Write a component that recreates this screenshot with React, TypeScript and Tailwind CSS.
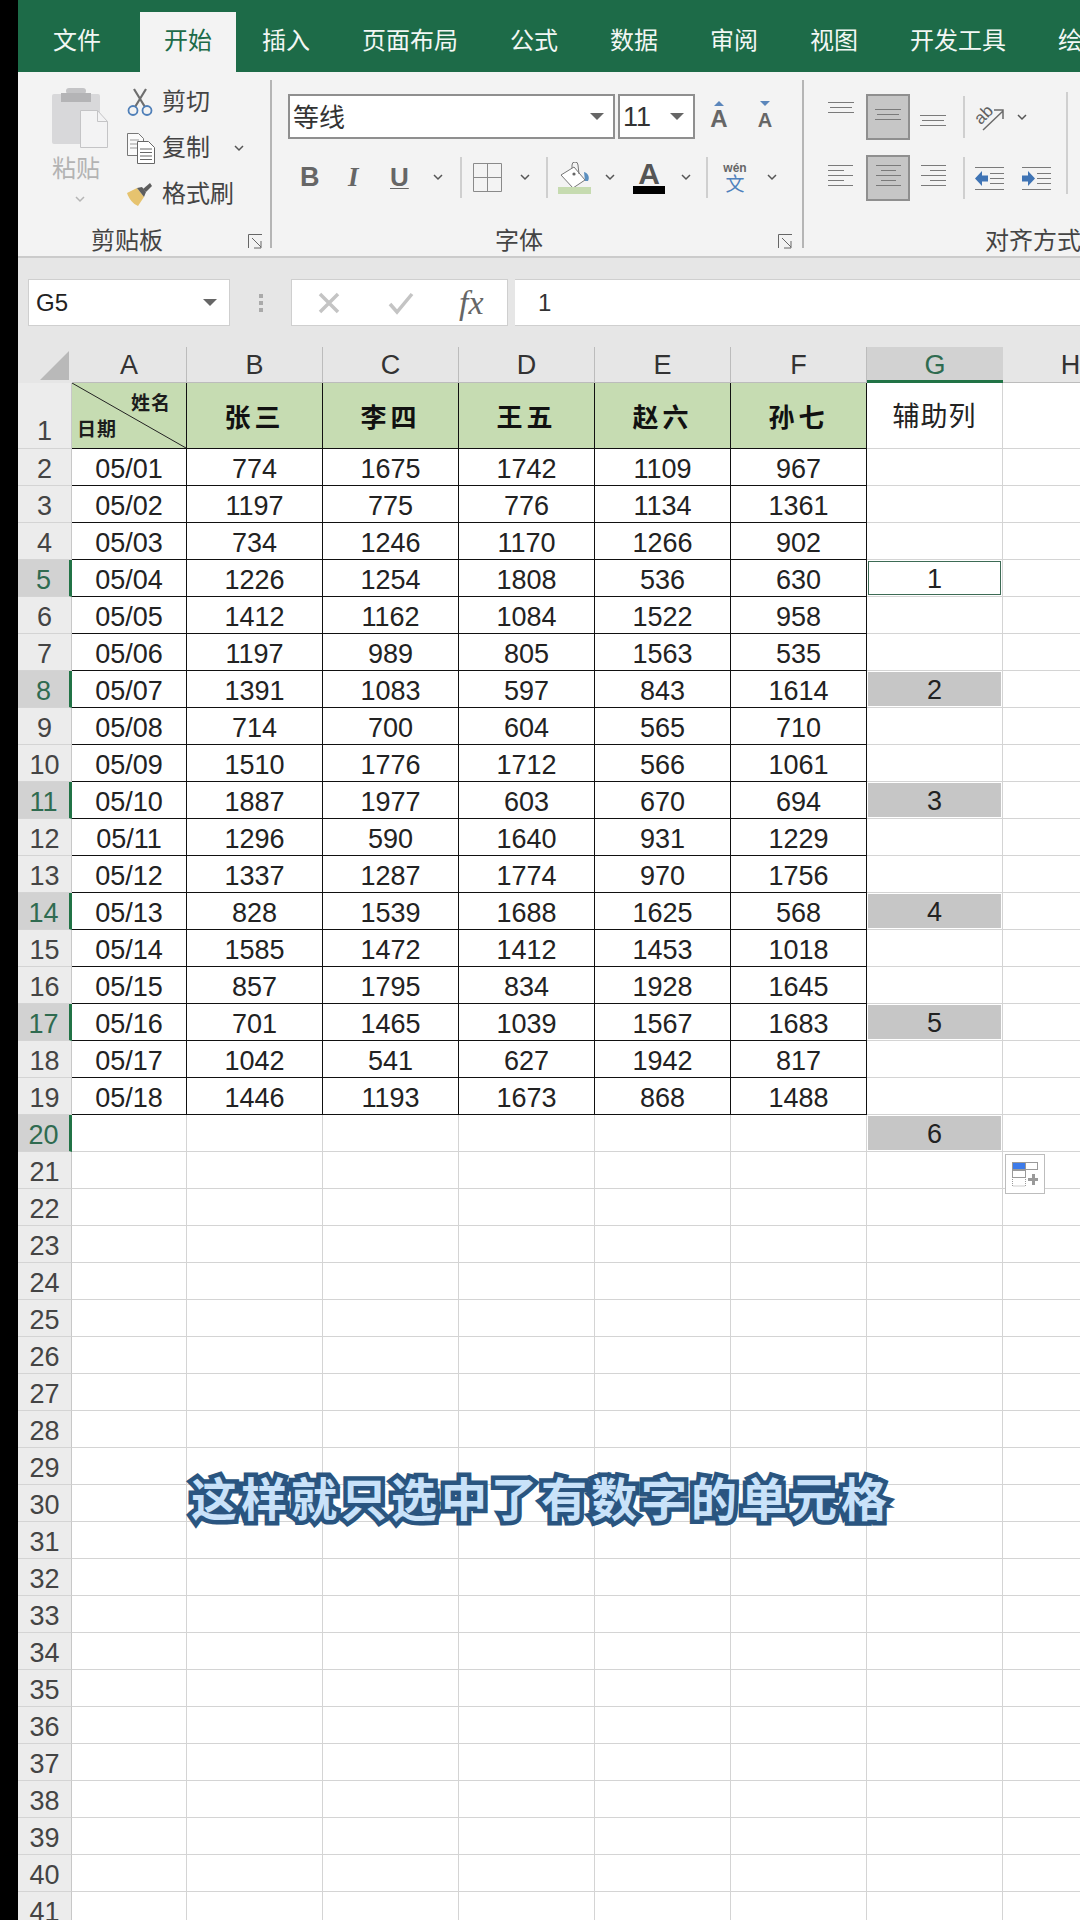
const cjk = "font-['Liberation_Sans','Noto_Sans_CJK_SC',sans-serif]";

const tabs = ["文件", "开始", "插入", "页面布局", "公式", "数据", "审阅", "视图", "开发工具", "绘图"];
const cols = ["A", "B", "C", "D", "E", "F", "G", "H"];
const names = ["张三", "李四", "王五", "赵六", "孙七"];
const picked: Record<number, number> = { 5: 1, 8: 2, 11: 3, 14: 4, 17: 5, 20: 6 };

const rows = [
  ["05/01", 774, 1675, 1742, 1109, 967],
  ["05/02", 1197, 775, 776, 1134, 1361],
  ["05/03", 734, 1246, 1170, 1266, 902],
  ["05/04", 1226, 1254, 1808, 536, 630],
  ["05/05", 1412, 1162, 1084, 1522, 958],
  ["05/06", 1197, 989, 805, 1563, 535],
  ["05/07", 1391, 1083, 597, 843, 1614],
  ["05/08", 714, 700, 604, 565, 710],
  ["05/09", 1510, 1776, 1712, 566, 1061],
  ["05/10", 1887, 1977, 603, 670, 694],
  ["05/11", 1296, 590, 1640, 931, 1229],
  ["05/12", 1337, 1287, 1774, 970, 1756],
  ["05/13", 828, 1539, 1688, 1625, 568],
  ["05/14", 1585, 1472, 1412, 1453, 1018],
  ["05/15", 857, 1795, 834, 1928, 1645],
  ["05/16", 701, 1465, 1039, 1567, 1683],
  ["05/17", 1042, 541, 627, 1942, 817],
  ["05/18", 1446, 1193, 1673, 868, 1488],
];

function Chevron({ color = "#555" }: { color?: string }) {
  return (
    <svg width="10" height="7" viewBox="0 0 10 7" className="shrink-0">
      <path d="M1 1l4 4 4-4" fill="none" stroke={color} strokeWidth="1.5" />
    </svg>
  );
}

function Caret() {
  return (
    <svg width="14" height="8" viewBox="0 0 14 8" className="shrink-0">
      <path d="M0 0h14L7 7z" fill="#666" />
    </svg>
  );
}

function Launcher() {
  return (
    <svg width="15" height="15" viewBox="0 0 15 15">
      <path d="M.5 14V.5H14M4 4l9 9M13 7v7H6" fill="none" stroke="#666" strokeWidth="1" />
    </svg>
  );
}

function Lines({ spans, w = 26 }: { spans: number[][]; w?: number }) {
  return (
    <svg width={w} height={spans.length * 5 + 1} viewBox={`0 0 ${w} ${spans.length * 5 + 1}`}>
      {spans.map(([a, b], i) => (
        <path key={i} d={`M${a} ${i * 5 + 0.5}H${b}`} stroke="#7a7a7a" strokeWidth="1" />
      ))}
    </svg>
  );
}

function Sep({ h = "h-[41px]" }: { h?: string }) {
  return <div className={`w-[2px] bg-[#cfcfcf] shrink-0 ${h}`} />;
}

function PasteIcon() {
  return (
    <svg width="56" height="60" viewBox="0 0 56 60">
      <rect x="0" y="6" width="48" height="50" rx="2" fill="#d8d8da" />
      <rect x="14" y="0" width="20" height="6" rx="3" fill="#c4c4c6" />
      <rect x="9" y="5" width="30" height="9" fill="#b4b4b6" />
      <path d="M28.5 22.5h17l10 11v26h-27z" fill="#f3f3f4" stroke="#c4c4c6" />
      <path d="M45.5 22.5v11h10" fill="none" stroke="#c4c4c6" />
    </svg>
  );
}

function ScissorsIcon() {
  return (
    <svg width="26" height="28" viewBox="0 0 26 28">
      <path d="M7 1l11 18M19 1L8 19" stroke="#6e6e6e" strokeWidth="2.2" fill="none" />
      <circle cx="6" cy="22.5" r="4.5" fill="none" stroke="#4f7fb8" strokeWidth="1.8" />
      <circle cx="20" cy="22.5" r="4.5" fill="none" stroke="#4f7fb8" strokeWidth="1.8" />
    </svg>
  );
}

function CopyIcon() {
  return (
    <svg width="28" height="31" viewBox="0 0 28 31">
      <path d="M.5.5h11l5 5v17H.5z" fill="#fafafa" stroke="#777" />
      <path d="M3 7h9M3 11h9M3 15h9" stroke="#999" />
      <path d="M10.5 8.5h11l6 6v16h-17z" fill="#fff" stroke="#666" />
      <path d="M13 16h12M13 19.5h12M13 23h12M13 26.5h12" stroke="#666" />
    </svg>
  );
}

function BrushIcon() {
  return (
    <svg width="26" height="24" viewBox="0 0 26 24">
      <path d="M0 11l10-5 7 9-6 9c-5-2-9-7-11-13z" fill="#e6c36f" />
      <path d="M10 6l5-1 4 5-2 5z" fill="#5d5d5d" />
      <path d="M16 7l7-6 2 3-6 6z" fill="#5d5d5d" />
    </svg>
  );
}

function BucketIcon() {
  return (
    <svg width="34" height="32" viewBox="0 0 34 32">
      <path d="M3 13L16 5l11 13-12 8z" fill="#fff" stroke="#777" />
      <path d="M14 6V3a3 3 0 016 0l1 9" fill="none" stroke="#777" />
      <circle cx="16" cy="12" r="1.6" fill="#666" />
      <path d="M26 10c4 1 6 5 4 9h-3z" fill="#5b8fbf" />
      <rect x="0" y="25" width="33" height="7" fill="#c6dbb0" />
    </svg>
  );
}

function AbIcon() {
  return (
    <svg width="30" height="28" viewBox="0 0 30 28">
      <text x="9" y="17" textAnchor="middle" transform="rotate(-45 9 12)" fontSize="17" fontFamily="Liberation Sans" fill="#5f5f5f">ab</text>
      <path d="M8 27L28 8M19 7h9v9" fill="none" stroke="#6b6b6b" strokeWidth="1.5" />
    </svg>
  );
}

function IndentIcon({ flip }: { flip?: boolean }) {
  return (
    <svg width="29" height="23" viewBox="0 0 29 23">
      <path d="M0 .5h29M0 22.5h29M15 6.5h14M15 11.5h14M15 16.5h14" stroke="#7a7a7a" />
      {flip ? (
        <path d="M0 8.5h6V4l7 7.5-7 7.5v-4.500H0z" fill="#3f74b5" />
      ) : (
        <path d="M13 8.500H7V4l-7 7.500L7 19v-4.500h6z" fill="#3f74b5" />
      )}
    </svg>
  );
}

function PasteOptions() {
  return (
    <svg width="26" height="25" viewBox="0 0 26 25">
      <rect x=".5" y=".5" width="13" height="7" fill="#3d7bea" stroke="#9a9a9a" />
      <rect x="13.500" y=".5" width="12" height="7" fill="#fff" stroke="#9a9a9a" />
      <rect x=".5" y="8.500" width="13" height="7" fill="#fff" stroke="#9a9a9a" />
      <path d="M.5 17v7h13v-7" fill="none" stroke="#9a9a9a" strokeDasharray="1 1" />
      <path d="M20 12h3v4h3v3h-3v4h-3v-4h-4v-3h4z" fill="#9a9a9a" />
    </svg>
  );
}

function Ribbon() {
  return (
    <div className="flex h-[186px] bg-[#f3f3f3] border-b-2 border-[#cbcbcb] text-[#444] shrink-0">
      {/* 剪贴板 */}
      <div className="w-[252px] flex flex-col shrink-0 border-r-2 border-transparent">
        <div className="flex h-[154px]">
          <div className="ml-[34px] w-[56px] pt-[16px] flex flex-col items-start">
            <PasteIcon />
            <span className="mt-[8px] text-[24px] leading-[26px] text-[#b3b3b3]">粘贴</span>
            <div className="mt-[14px] ml-[23px]"><Chevron color="#b5b5b5" /></div>
          </div>
          <div className="ml-[19px] pt-[7px] flex flex-col">
            <div className="h-[46px] flex items-center"><div className="w-[35px]"><ScissorsIcon /></div><span className="text-[24px]">剪切</span></div>
            <div className="h-[46px] flex items-center"><div className="w-[35px]"><CopyIcon /></div><span className="text-[24px]">复制</span><div className="ml-[24px]"><Chevron /></div></div>
            <div className="h-[46px] flex items-center"><div className="w-[35px]"><BrushIcon /></div><span className="text-[24px]">格式刷</span></div>
          </div>
        </div>
        <div className="flex items-center h-[30px]">
          <span className="ml-[73px] text-[24px] leading-none">剪贴板</span>
          <div className="ml-[85px]"><Launcher /></div>
        </div>
      </div>
      <div className="w-[2px] h-[168px] mt-[8px] bg-[#b5b5b5] shrink-0" />

      {/* 字体 */}
      <div className="w-[530px] flex flex-col shrink-0">
        <div className="h-[154px] pt-[22px] pl-[16px]">
          <div className="flex items-center">
            <div className="w-[327px] h-[45px] bg-white border-2 border-[#8f8f8f] flex items-center justify-between pl-[3px] pr-[9px]">
              <span className="text-[26px] text-[#333] pt-[4px]">等线</span><Caret />
            </div>
            <div className="ml-[3px] w-[77px] h-[45px] bg-white border-2 border-[#8f8f8f] flex items-center justify-between pl-[3px] pr-[9px]">
              <span className="text-[27px] text-[#333] pt-[2px]">11</span><Caret />
            </div>
            <div className="ml-[11px] w-[26px] flex flex-col items-center">
              <svg width="10" height="5" viewBox="0 0 10 5"><path d="M5 0l5 5H0z" fill="#5b86bb" /></svg>
              <span className="text-[24px] leading-[26px] font-bold text-[#666]">A</span>
            </div>
            <div className="ml-[21px] w-[24px] flex flex-col items-center">
              <svg width="10" height="5" viewBox="0 0 10 5"><path d="M0 0h10L5 5z" fill="#5b86bb" /></svg>
              <span className="mt-[2px] text-[20px] leading-[24px] font-bold text-[#666]">A</span>
            </div>
          </div>
          <div className="flex items-center h-[41px] mt-[18px]">
            <span className="ml-[12px] w-[48px] text-[27px] font-bold text-[#666] font-['Liberation_Sans']">B</span>
            <span className="w-[42px] text-[27px] font-bold italic text-[#666] font-['Liberation_Serif']">I</span>
            <span className="w-[43px] text-[26px] font-bold text-[#666] underline underline-offset-2 decoration-1">U</span>
            <Chevron />
            <div className="ml-[17px]"><Sep /></div>
            <svg width="29" height="29" viewBox="0 0 29 29" className="ml-[11px]">
              <path d="M.5.5h28v28H.5zM14.500.5v28M.5 14.500h28" fill="none" stroke="#8a8a8a" />
            </svg>
            <div className="ml-[18px]"><Chevron /></div>
            <div className="ml-[16px]"><Sep /></div>
            <div className="ml-[10px]"><BucketIcon /></div>
            <div className="ml-[13px]"><Chevron /></div>
            <div className="ml-[18px] w-[32px] h-[32px] flex flex-col items-center">
              <span className="text-[30px] leading-[24px] font-bold text-[#555]">A</span>
              <div className="w-[32px] h-[8px] bg-black" />
            </div>
            <div className="ml-[16px]"><Chevron /></div>
            <div className="ml-[15px]"><Sep /></div>
            <div className="ml-[13px] w-[28px] flex flex-col items-center">
              <span className="text-[12px] leading-[13px] font-bold text-[#666]">wén</span>
              <span className="text-[19px] leading-[19px] text-[#4f81bd]">文</span>
            </div>
            <div className="ml-[18px]"><Chevron /></div>
          </div>
        </div>
        <div className="flex items-center h-[30px]">
          <span className="ml-[223px] text-[24px] leading-none">字体</span>
          <div className="ml-[235px]"><Launcher /></div>
        </div>
      </div>
      <div className="w-[2px] h-[168px] mt-[8px] bg-[#b5b5b5] shrink-0" />

      {/* 对齐方式 */}
      <div className="flex-1 flex flex-col min-w-0">
        <div className="h-[154px] pt-[22px] pl-[24px]">
          <div className="flex items-center h-[46px]">
            <div className="w-[38px] self-start mt-[8px]"><Lines spans={[[0, 26], [2, 24], [0, 26]]} /></div>
            <div className="w-[44px] h-[46px] bg-[#c6c6c6] border-2 border-[#8f8f8f] flex items-center justify-center"><Lines spans={[[0, 26], [2, 24], [0, 26]]} /></div>
            <div className="w-[53px] pl-[10px] self-end mb-[9px]"><Lines spans={[[0, 26], [2, 24], [0, 26]]} /></div>
            <Sep h="h-[42px]" />
            <div className="ml-[10px]"><AbIcon /></div>
            <div className="ml-[12px]"><Chevron /></div>
            <div className="ml-[39px] mt-[8px]"><Sep h="h-[58px]" /></div>
          </div>
          <div className="flex items-center h-[46px] mt-[15px]">
            <div className="w-[38px]"><Lines w={25} spans={[[0, 25], [0, 16], [0, 25], [0, 16], [0, 25]]} /></div>
            <div className="w-[44px] h-[46px] bg-[#c6c6c6] border-2 border-[#8f8f8f] flex items-center justify-center"><Lines w={25} spans={[[0, 25], [5, 20], [0, 25], [5, 20], [0, 25]]} /></div>
            <div className="w-[53px] pl-[11px]"><Lines w={25} spans={[[0, 25], [9, 25], [0, 25], [9, 25], [0, 25]]} /></div>
            <Sep h="h-[42px]" />
            <div className="ml-[10px]"><IndentIcon /></div>
            <div className="ml-[18px]"><IndentIcon flip /></div>
            <div className="ml-[15px] mb-[14px]"><Sep h="h-[46px]" /></div>
          </div>
        </div>
        <div className="flex items-center h-[30px]">
          <span className="ml-[181px] text-[24px] leading-none whitespace-nowrap">对齐方式</span>
        </div>
      </div>
    </div>
  );
}

function FormulaBar() {
  return (
    <div className="flex items-center h-[89px] bg-[#e6e6e6] pl-[10px] shrink-0">
      <div className="w-[202px] h-[47px] bg-white border border-[#cfcfcf] flex items-center justify-between pl-[7px] pr-[12px]">
        <span className="text-[24px] text-[#222]">G5</span><Caret />
      </div>
      <div className="w-[61px] flex flex-col items-center gap-[3px]">
        <div className="w-[4px] h-[4px] bg-[#aaa]" />
        <div className="w-[4px] h-[4px] bg-[#aaa]" />
        <div className="w-[4px] h-[4px] bg-[#aaa]" />
      </div>
      <div className="w-[217px] h-[47px] bg-white border border-[#cfcfcf] flex items-center">
        <svg width="24" height="24" viewBox="0 0 24 24" className="ml-[25px]">
          <path d="M3 3l18 18M21 3L3 21" stroke="#c4c4c4" strokeWidth="3.500" />
        </svg>
        <svg width="26" height="24" viewBox="0 0 26 24" className="ml-[47px]">
          <path d="M2 13l7 8L24 3" fill="none" stroke="#c4c4c4" strokeWidth="3.500" />
        </svg>
        <span className="ml-[45px] text-[34px] leading-none italic text-[#666] font-['Liberation_Serif']">fx</span>
      </div>
      <div className="ml-[7px] flex-1 h-[47px] bg-white border-y border-[#cfcfcf] flex items-center pl-[23px]">
        <span className="text-[24px] text-[#333]">1</span>
      </div>
    </div>
  );
}

function Sheet() {
  const rowNums = Array.from({ length: 41 }, (_, i) => i + 1);
  return (
    <div className="relative flex-1 min-h-0 overflow-hidden bg-white text-[27px] leading-none text-[#222] font-['Liberation_Sans','Noto_Sans_CJK_SC',sans-serif]">
      <div className="grid grid-cols-[54px_115px_136px_136px_136px_136px_136px_136px_136px] grid-rows-[36px_66px] auto-rows-[37px]">
        {/* header row */}
        <div className="bg-[#e6e6e6] flex items-end justify-end pr-[3px] pb-[3px]">
          <svg width="29" height="29" viewBox="0 0 29 29"><path d="M29 0v29H0z" fill="#b9b9b9" /></svg>
        </div>
        {cols.map((c) => (
          <div
            key={c}
            className={
              c === "G"
                ? "bg-[#d2d2d2] border-b-[3px] border-[#217346] flex items-center justify-center text-[#2f6b50] pt-[3px]"
                : "bg-[#e6e6e6] border-r border-b border-[#bcbcbc] flex items-center justify-center text-[#333] pt-[1px]"
            }
          >
            {c}
          </div>
        ))}

        {rowNums.map((n) => {
          const isPicked = picked[n] !== undefined;
          const data = n >= 2 && n <= 19 ? rows[n - 2] : null;
          return (
            <div key={n} className="contents">
              <div
                className={`flex justify-center border-b border-[#d4d4d4] ${n === 1 ? "items-end pb-[3px]" : "items-center pt-[4px]"} ${
                  isPicked ? "bg-[#d2d2d2] text-[#2f6b50] border-r-[3px] border-r-[#217346]" : "bg-[#ececec] text-[#444] border-r border-r-[#c8c8c8]"
                }`}
              >
                {n}
              </div>
              {n === 1 && (
                <>
                  <div className="relative bg-[#c6dcb2] border-r border-b border-[#111] text-[19px] font-bold tracking-[1px] text-[#1c1c1c]">
                    <svg className="absolute inset-0 w-full h-full" viewBox="0 0 114 65" preserveAspectRatio="none">
                      <path d="M0 0L114 65" stroke="#222" strokeWidth="1" />
                    </svg>
                    <span className="absolute right-[15px] top-[11px]">姓名</span>
                    <span className="absolute left-[5px] bottom-[9px]">日期</span>
                  </div>
                  {names.map((name) => (
                    <div key={name} className="bg-[#c6dcb2] border-r border-b border-[#111] flex items-center justify-center text-[26px] font-bold tracking-[4px] text-[#111] pt-[4px]">
                      {name}
                    </div>
                  ))}
                  <div className="border-r border-b border-[#d4d4d4] flex items-center justify-center tracking-[1px] pt-[4px]">辅助列</div>
                  <div className="border-b border-[#d4d4d4]" />
                </>
              )}
              {n > 1 &&
                Array.from({ length: 6 }, (_, i) => (
                  <div
                    key={i}
                    className={`flex items-center justify-center pt-[4px] border-r border-b ${
                      data ? "border-[#111]" : "border-[#d4d4d4]"
                    }`}
                  >
                    {data ? data[i] : ""}
                  </div>
                ))}
              {n > 1 && (
                <div className="border-r border-b border-[#d4d4d4] p-[1px]">
                  {isPicked && (
                    <div
                      className={`w-full h-full flex items-center justify-center pt-[3px] ${
                        n === 5 ? "border border-[#3d6b55] bg-white" : "bg-[#c6c6c6]"
                      }`}
                    >
                      {picked[n]}
                    </div>
                  )}
                </div>
              )}
              {n > 1 && <div className="border-b border-[#d4d4d4]" />}
            </div>
          );
        })}
      </div>

      {/* paste options button */}
      <div className="absolute left-[987px] top-[807px] w-[40px] h-[40px] bg-white border border-[#bdbdbd] flex items-center justify-center">
        <PasteOptions />
      </div>

      {/* video caption */}
      <div className="absolute left-[173px] top-[1123px] whitespace-nowrap text-[46px] leading-[60px] font-bold tracking-[4px] text-[#c9e2f9] [-webkit-text-stroke:9px_#2a5580] [paint-order:stroke_fill]">
        这样就只选中了有数字的单元格
      </div>
    </div>
  );
}

export default function App() {
  return (
    <div className={`flex w-[1080px] h-[1920px] overflow-hidden bg-black ${cjk}`}>
      <div className="w-[18px] shrink-0 bg-black" />
      <div className="flex-1 min-w-0 flex flex-col">
        <div className="flex items-end h-[72px] bg-[#1d6b48] pl-[35px] shrink-0 gap-[4px]">
          {tabs.map((t, i) => (
            <div
              key={t}
              className={
                i === 1
                  ? "h-[60px] px-[24px] mr-[-2px] bg-[#f3f3f3] text-[#1d6b48] text-[24px] flex items-center pb-[2px] whitespace-nowrap"
                  : i === 0
                    ? "h-[60px] pr-[35px] text-[#f2f7f4] text-[24px] flex items-center pb-[2px] whitespace-nowrap"
                    : "h-[60px] px-[24px] text-[#f2f7f4] text-[24px] flex items-center pb-[2px] whitespace-nowrap"
              }
            >
              {t}
            </div>
          ))}
        </div>
        <Ribbon />
        <FormulaBar />
        <Sheet />
      </div>
    </div>
  );
}
